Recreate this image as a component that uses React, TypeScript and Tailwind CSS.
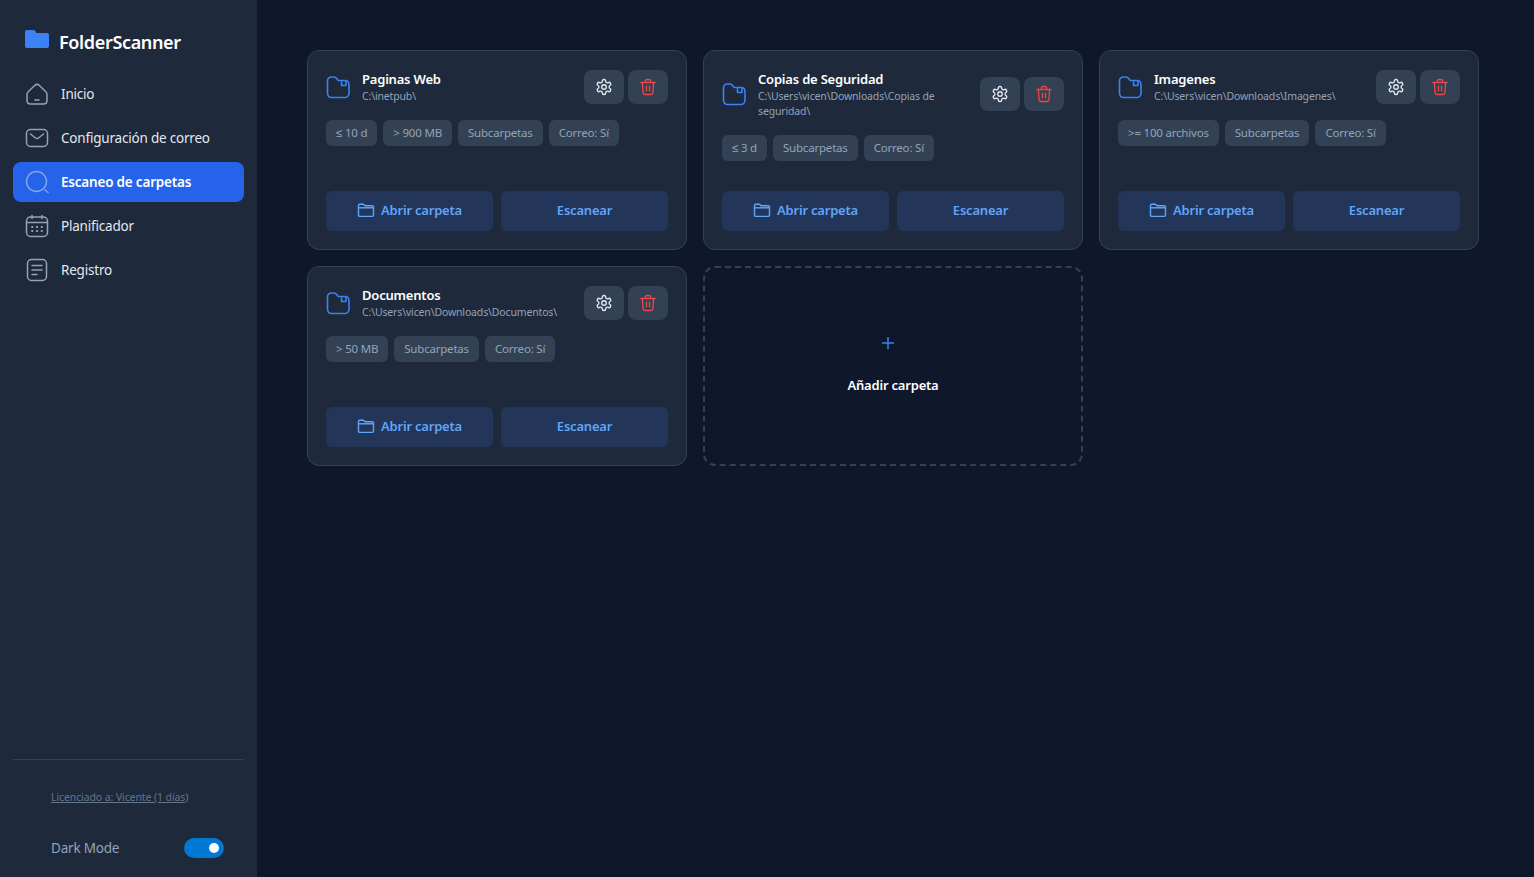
import React from "react";

const S = { fill: "none", stroke: "currentColor", strokeWidth: 1.5, strokeLinecap: "round", strokeLinejoin: "round" } as const;

function HomeIc() {
  return (
    <svg width="24" height="24" viewBox="0 0 24 24" {...S}>
      <path d="M2 12.2c0-1 .4-1.8 1.2-2.5l6.4-6.2c1.4-1.3 3.4-1.3 4.8 0l6.4 6.2c.8.7 1.2 1.5 1.2 2.5v6.3c0 2-1.5 3.5-3.5 3.5h-13C3.500 22 2 20.500 2 18.500z" />
      <path d="M10 18h4" />
    </svg>
  );
}
function MailIc() {
  return (
    <svg width="24" height="24" viewBox="0 0 24 24" {...S}>
      <rect x="1.500" y="3.500" width="21" height="17" rx="4" />
      <path d="M5.500 8l5 4c1 .8 2 .8 3 0l5-4" />
    </svg>
  );
}
function SearchIc() {
  return (
    <svg width="24" height="24" viewBox="0 0 24 24" {...S}>
      <circle cx="11.500" cy="11.500" r="10" />
      <path d="M20 20l3 2.500" />
    </svg>
  );
}
function CalIc() {
  return (
    <svg width="24" height="24" viewBox="0 0 24 24" {...S}>
      <rect x="1.500" y="3" width="21" height="19.500" rx="4" />
      <path d="M1.500 8.500h21M7 1.500v3M17 1.500v3" />
      <path d="M7 13h.5M11.800 13h.5M16.500 13h.5M7 17h.5M11.800 17h.5M16.500 17h.5" strokeWidth="1.800" />
    </svg>
  );
}
function DocIc() {
  return (
    <svg width="24" height="24" viewBox="0 0 24 24" {...S}>
      <rect x="2.500" y="1.500" width="19" height="21" rx="4" />
      <path d="M7 7.500h10M7 12h10M7 16.500h5" />
    </svg>
  );
}
function FolderOutline() {
  return (
    <svg width="24" height="24" viewBox="0 0 24 24" className="text-[#3b82f6]" fill="none" stroke="currentColor" strokeWidth="1.600" strokeLinejoin="round" strokeLinecap="round">
      <path d="M1.500 6c0-2.500 1.500-4 4-4h2.300c1.200 0 2 .4 2.700 1.300l1 1.400c.4.500.8.800 1.500.8h6c2.200 0 4 1.300 4 4v8.500c0 2.500-1.800 4.500-4.200 4.500H5.500c-2.400 0-4-2-4-4.500z" />
      <path d="M15.500 6v4.500h4.500V6.500" />
    </svg>
  );
}
function SmallFolder() {
  return (
    <svg width="18" height="18" viewBox="0 0 18 18" fill="none" stroke="currentColor" strokeWidth="1.400" strokeLinejoin="round">
      <path d="M1.500 3.500c0-.8.500-1.300 1.300-1.300h3.300c.5 0 .8.200 1.100.6l.8 1h7.200c.8 0 1.300.5 1.300 1.300v8c0 .8-.5 1.300-1.300 1.300H2.800c-.8 0-1.300-.5-1.300-1.300z" />
      <path d="M1.500 5.800h15" />
    </svg>
  );
}
function Gear() {
  return (
    <svg width="18" height="18" viewBox="0 0 24 24" fill="none" stroke="currentColor" strokeWidth="1.800" strokeLinecap="round" strokeLinejoin="round" className="text-[#e2e8f0]">
      <path d="M12.220 2h-.44a2 2 0 0 0-2 2v.18a2 2 0 0 1-1 1.730l-.43.250a2 2 0 0 1-2 0l-.15-.080a2 2 0 0 0-2.730.730l-.22.380a2 2 0 0 0 .730 2.730l.15.100a2 2 0 0 1 1 1.720v.510a2 2 0 0 1-1 1.740l-.15.090a2 2 0 0 0-.730 2.730l.22.380a2 2 0 0 0 2.730.730l.15-.080a2 2 0 0 1 2 0l.43.250a2 2 0 0 1 1 1.730V20a2 2 0 0 0 2 2h.44a2 2 0 0 0 2-2v-.18a2 2 0 0 1 1-1.730l.43-.250a2 2 0 0 1 2 0l.15.080a2 2 0 0 0 2.730-.730l.22-.390a2 2 0 0 0-.730-2.730l-.15-.080a2 2 0 0 1-1-1.740v-.5a2 2 0 0 1 1-1.740l.15-.090a2 2 0 0 0 .730-2.730l-.22-.380a2 2 0 0 0-2.730-.730l-.15.080a2 2 0 0 1-2 0l-.43-.250a2 2 0 0 1-1-1.730V4a2 2 0 0 0-2-2z" />
      <circle cx="12" cy="12" r="3" />
    </svg>
  );
}
function Trash() {
  return (
    <svg width="18" height="18" viewBox="0 0 24 24" fill="none" stroke="currentColor" strokeWidth="1.800" strokeLinecap="round" strokeLinejoin="round" className="text-[#ef4444]">
      <path d="M2.500 6h19M8.500 5.500V4.200C8.500 2.900 9.300 2 10.500 2h3c1.200 0 2 .9 2 2.200v1.300" />
      <path d="M4.500 6l.9 13c.1 1.800 1.200 3 3 3h7.200c1.800 0 2.900-1.200 3-3l.9-13" />
      <path d="M10 11v6M14 11v6" />
    </svg>
  );
}

const nav = [
  { label: "Inicio", icon: <HomeIc /> },
  { label: "Configuración de correo", icon: <MailIc /> },
  { label: "Escaneo de carpetas", icon: <SearchIc />, active: true },
  { label: "Planificador", icon: <CalIc /> },
  { label: "Registro", icon: <DocIc /> },
];

const cards = [
  { title: "Paginas Web", path: "C:\\inetpub\\", tags: ["≤ 10 d", "> 900 MB", "Subcarpetas", "Correo: Sí"] },
  { title: "Copias de Seguridad", path: "C:\\Users\\vicen\\Downloads\\Copias de seguridad\\", tags: ["≤ 3 d", "Subcarpetas", "Correo: Sí"] },
  { title: "Imagenes", path: "C:\\Users\\vicen\\Downloads\\Imagenes\\", tags: [">= 100 archivos", "Subcarpetas", "Correo: Sí"] },
  { title: "Documentos", path: "C:\\Users\\vicen\\Downloads\\Documentos\\", tags: ["> 50 MB", "Subcarpetas", "Correo: Sí"] },
];

function Card({ title, path, tags }: { title: string; path: string; tags: string[] }) {
  return (
    <div className="h-[200px] rounded-xl border border-[#334155] bg-[#1e293b] p-[18px] flex flex-col">
      <div className="flex items-center gap-3">
        <div className="shrink-0"><FolderOutline /></div>
        <div className="flex-1 min-w-0 pr-4">
          <div className="text-[13px] leading-5 font-semibold text-white tracking-[-0.2px]">{title}</div>
          <div className="text-[10.5px] leading-[15px] text-[#94a3b8] tracking-[-0.15px]">{path}</div>
        </div>
        <div className="flex gap-1 shrink-0 self-center">
          <button className="w-10 h-[34px] rounded-lg bg-[#334155] flex items-center justify-center"><Gear /></button>
          <button className="w-10 h-[34px] rounded-lg bg-[#334155] flex items-center justify-center"><Trash /></button>
        </div>
      </div>
      <div className="flex gap-1.5 mt-4">
        {tags.map((t) => (
          <span key={t} className="h-[26px] px-[10px] rounded-md bg-[#334155] text-[#94a3b8] text-[11.5px] tracking-[-0.2px] flex items-center whitespace-nowrap">{t}</span>
        ))}
      </div>
      <div className="mt-auto flex gap-2">
        <button className="flex-1 h-10 rounded-md bg-[#233659] text-[#60a5fa] text-[13px] font-semibold tracking-[-0.2px] flex items-center justify-center gap-1.5">
          <SmallFolder />Abrir carpeta
        </button>
        <button className="flex-1 h-10 rounded-md bg-[#233659] text-[#60a5fa] text-[13px] font-semibold tracking-[-0.2px] flex items-center justify-center">Escanear</button>
      </div>
    </div>
  );
}

export default function App() {
  return (
    <div className="h-[877px] w-full flex overflow-hidden bg-[#0f172a] font-['Noto_Sans',sans-serif]">
      <aside className="w-[257px] shrink-0 bg-[#1e293b] flex flex-col px-[13px]">
        <div className="flex items-center gap-[10px] pl-3 pt-[21px] h-[62px]">
          <svg width="24" height="18" viewBox="0 0 24 18" className="text-[#3b82f6] -mt-1.5" fill="currentColor">
            <path d="M0 2c0-1.200.8-2 2-2h6.500c.7 0 1.200.3 1.600.8L11.500 3H22c1.200 0 2 .8 2 2v11c0 1.200-.8 2-2 2H2c-1.200 0-2-.8-2-2z" />
          </svg>
          <span className="text-[18px] font-semibold text-white tracking-[-0.35px] leading-6">FolderScanner</span>
        </div>
        <nav className="mt-3 flex flex-col gap-1">
          {nav.map((n) => (
            <div key={n.label} className={`h-10 rounded-lg pl-3 flex items-center gap-3 text-[13.500px] tracking-[-0.2px] ${n.active ? "bg-[#2563eb] text-white font-semibold" : "text-[#e2e8f0]"}`}>
              <span className={n.active ? "text-[#7ea6ea]" : "text-[#94a3b8]"}>{n.icon}</span>
              {n.label}
            </div>
          ))}
        </nav>
        <div className="mt-auto border-t border-[#334155] pl-[38px] pt-[29px] h-[118px]">
          <a className="block text-[10.500px] leading-4 text-[#64748b] underline tracking-[-0.1px]">Licenciado a: Vicente (1 días)</a>
          <div className="mt-[33px] flex items-center justify-between pr-[20px]">
            <span className="text-[13.500px] text-[#94a3b8] tracking-[-0.2px]">Dark Mode</span>
            <span className="w-10 h-5 rounded-full bg-[#0078d4] flex items-center justify-end pr-[5px]">
              <span className="w-[10px] h-[10px] rounded-full bg-white" />
            </span>
          </div>
        </div>
      </aside>
      <main className="flex-1 pl-[50px] pt-[50px]">
        <div className="grid grid-cols-[repeat(3,380px)] gap-4">
          {cards.map((c) => <Card key={c.title} {...c} />)}
          <div className="h-[200px] rounded-xl border-2 border-dashed border-[#334155] flex flex-col items-center pt-[68px]">
            <svg width="14" height="14" viewBox="0 0 14 14" className="text-[#3b82f6] -ml-2.5" stroke="currentColor" strokeWidth="1.500"><path d="M7 1v12M1 7h12" /></svg>
            <div className="mt-[26px] text-[13px] font-semibold text-white tracking-[-0.2px]">Añadir carpeta</div>
          </div>
        </div>
      </main>
    </div>
  );
}
